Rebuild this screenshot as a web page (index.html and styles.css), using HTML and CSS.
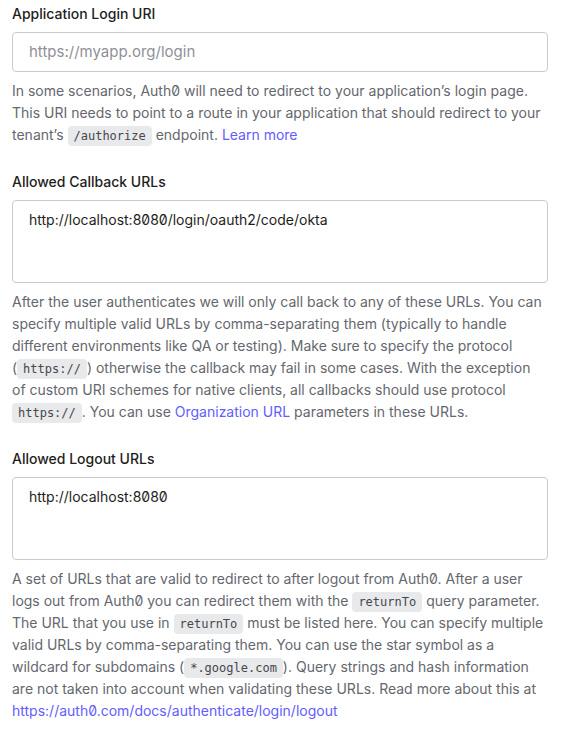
FILE: index.html
```html
<!DOCTYPE html>
<html>
<head>
<meta charset="utf-8">
<link rel="stylesheet" href="styles.css">
</head>
<body>
<div class="page">
  <section class="field">
    <label class="label">Application Login URI</label>
    <div class="input"><span class="placeholder">https://myapp.org/login</span></div>
    <p class="help">In some scenarios, Auth0 will need to redirect to your application’s login page. This URI needs to point to a route in your application that should redirect to your tenant’s <code>/authorize</code> endpoint. <a href="#">Learn more</a></p>
  </section>
  <section class="field">
    <label class="label">Allowed Callback URLs</label>
    <div class="textarea">http://localhost:8080/login/oauth2/code/okta</div>
    <p class="help">After the user authenticates we will only call back to any of these URLs. You can specify multiple valid URLs by comma-separating them (typically to handle different environments like QA or testing). Make sure to specify the protocol (<code>https://</code>) otherwise the callback may fail in some cases. With the exception of custom URI schemes for native clients, all callbacks should use protocol <code>https://</code>. You can use <a href="#">Organization URL</a> parameters in these URLs.</p>
  </section>
  <section class="field">
    <label class="label">Allowed Logout URLs</label>
    <div class="textarea">http://localhost:8080</div>
    <p class="help">A set of URLs that are valid to redirect to after logout from Auth0. After a user logs out from Auth0 you can redirect them with the <code>returnTo</code> query parameter. The URL that you use in <code>returnTo</code> must be listed here. You can specify multiple valid URLs by comma-separating them. You can use the star symbol as a wildcard for subdomains (<code>*.google.com</code>). Query strings and hash information are not taken into account when validating these URLs. Read more about this at <a href="#">https://auth0.com/docs/authenticate/login/logout</a></p>
  </section>
</div>
</body>
</html>
```

FILE: styles.css
```css
* { box-sizing: border-box; }
html, body { margin: 0; padding: 0; background: #ffffff; }
body {
  font-family: Inter, "Noto Sans", sans-serif;
  font-feature-settings: "zero" 1;
  -webkit-font-smoothing: antialiased;
}
.page {
  width: 536px;
  margin-left: 12px;
  padding-top: 3px;
}
.field { margin-bottom: 25px; }
.label {
  display: block;
  font-size: 14px;
  line-height: 22px;
  font-weight: 500;
  color: #1e1e21;
  margin-bottom: 7px;
}
.input, .textarea {
  border: 1px solid #c9cace;
  border-radius: 4px;
  background: #fff;
  font-size: 14px;
  line-height: 22px;
  color: #1e1e21;
  padding: 0 16px;
}
.input {
  height: 40px;
  display: flex;
  align-items: center;
}
.placeholder { color: #8f9197; font-size: 15px; }
.textarea {
  height: 83px;
  padding-top: 8px;
}
.help {
  margin: 8px 3px 0 0;
  font-size: 14px;
  line-height: 22px;
  color: #65676e;
}
.help a { color: #635dff; text-decoration: none; }
code {
  font-family: "DejaVu Sans Mono", monospace;
  font-size: 12px;
  line-height: 14px;
  background: #e8e9eb;
  color: #46474c;
  border-radius: 4px;
  padding: 3px 6px;
}
```
